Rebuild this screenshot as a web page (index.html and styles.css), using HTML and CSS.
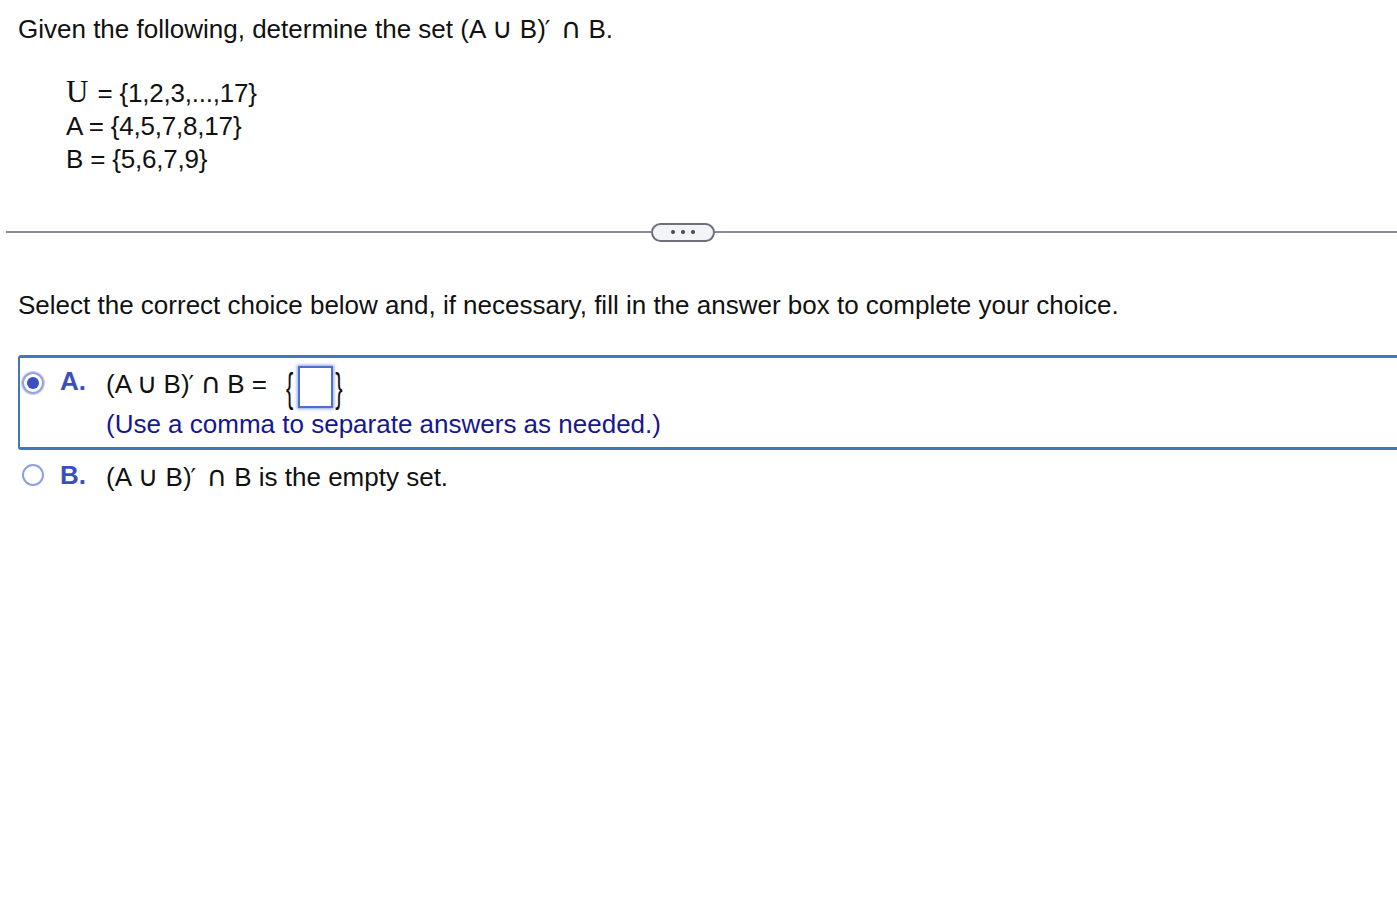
FILE: index.html
```html
<!DOCTYPE html>
<html lang="en">
<head>
<meta charset="utf-8">
<title>Set question</title>
<link rel="stylesheet" href="styles.css">
</head>
<body>
<div class="page">
  <p class="question">Given the following, determine the set (A <span class="op">∪</span> B)<span class="prime">′</span> <span class="op cap">∩</span> B.</p>
  <div class="sets">
    <div class="set-line"><span class="serif-u">U</span> = {1,2,3,...,17}</div>
    <div class="set-line">A = {4,5,7,8,17}</div>
    <div class="set-line">B = {5,6,7,9}</div>
  </div>
  <div class="divider">
    <div class="rule rule-left"></div>
    <button class="more" type="button"><span class="dot"></span><span class="dot"></span><span class="dot"></span></button>
    <div class="rule"></div>
  </div>
  <p class="instruction">Select the correct choice below and, if necessary, fill in the answer box to complete your choice.</p>
  <div class="choices">
    <div class="choice selected">
      <span class="radio checked"><span class="radio-dot"></span></span>
      <span class="letter">A.</span>
      <div class="choice-body">
        <div class="choice-line answer-line"><span class="expr">(A <span class="op">∪</span> B)<span class="prime">′</span> <span class="op cap">∩</span> B =</span><span class="brace brace-open">{</span><span class="answer-box"></span><span class="brace brace-close">}</span></div>
        <div class="hint">(Use a comma to separate answers as needed.)</div>
      </div>
    </div>
    <div class="choice plain">
      <span class="radio"></span>
      <span class="letter">B.</span>
      <div class="choice-body">
        <div class="choice-line">(A <span class="op">∪</span> B)<span class="prime">′</span> <span class="op cap">∩</span> B is the empty set.</div>
      </div>
    </div>
  </div>
</div>
</body>
</html>
```

FILE: styles.css
```css
html, body {
  margin: 0;
  padding: 0;
  background: #ffffff;
}
body {
  font-family: "Liberation Sans", Arial, sans-serif;
  color: #111111;
  font-size: 26px;
}
.page {
  padding: 14px 0 0 0;
}
.op {
  font-family: "DejaVu Sans", sans-serif;
  font-size: 1.08em;
  line-height: 0;
}
.op.cap {
  font-size: 1.08em;
  margin-left: 3px;
}
.prime {
  font-family: "DejaVu Sans", sans-serif;
  font-size: 0.95em;
  line-height: 0;
  margin-left: -1px;
}
.question {
  margin: 0 0 0 18px;
  line-height: 30px;
}
.sets {
  margin: 31px 0 0 66px;
  letter-spacing: -0.2px;
}
.set-line {
  line-height: 33px;
}
.serif-u {
  font-family: "Liberation Serif", "Times New Roman", serif;
  font-size: 31px;
  letter-spacing: 0;
  margin-right: 2px;
}
.divider {
  display: flex;
  align-items: center;
  margin: 46px 0 0 6px;
  height: 20px;
}
.rule {
  flex: 1;
  height: 2px;
  background: #8a8a97;
}
.rule-left {
  flex: none;
  width: 645px;
}
.more {
  width: 64px;
  height: 19px;
  border: 2px solid #6e6f7a;
  border-radius: 10px;
  background: #f3f4f7;
  padding: 0;
  display: flex;
  align-items: center;
  justify-content: center;
  gap: 6px;
  flex: none;
}
.dot {
  width: 4px;
  height: 4px;
  border-radius: 50%;
  background: #444650;
}
.instruction {
  margin: 48px 0 0 18px;
  line-height: 30px;
}
.choices {
  margin-top: 35px;
}
.choice {
  display: flex;
  align-items: flex-start;
  padding: 0 0 0 4px;
  margin-left: 18px;
}
.choice.selected {
  border: 3px solid #4078b9;
  border-left-width: 2px;
  border-right: none;
  border-radius: 3px 0 0 3px;
  padding: 8px 0 7px 2px;
  margin-bottom: 10px;
}
.radio {
  width: 22px;
  height: 22px;
  border: 2px solid #8fa0df;
  border-radius: 50%;
  box-sizing: border-box;
  margin-top: 6px;
  display: flex;
  align-items: center;
  justify-content: center;
  flex: none;
}
.choice.plain .radio {
  margin-top: 4px;
}
.radio.checked {
  border-color: #93a2e0;
  box-shadow: 0 0 0 1px #c8d0f0;
}
.radio-dot {
  width: 12px;
  height: 12px;
  border-radius: 50%;
  background: #3a4fc4;
}
.letter {
  color: #3b4fbc;
  font-weight: bold;
  width: 62px;
  padding-left: 16px;
  box-sizing: border-box;
  flex: none;
  line-height: 30px;
}
.choice-line {
  line-height: 34px;
  white-space: pre;
}
.answer-line {
  display: flex;
  align-items: flex-start;
}
.expr {
  line-height: 36px;
}
.expr .op {
  margin: 0 -1px;
}
.expr .op.cap {
  margin: 0 -1px 0 0;
}
.expr .prime {
  margin-right: -1px;
}
.brace {
  font-size: 22px;
  transform: scaleY(1.85);
  display: inline-block;
  line-height: 20px;
  align-self: center;
  margin: 3px 1px 0 1px;
}
.brace-open {
  margin-left: 19px;
  margin-right: 5px;
}
.brace-close {
  margin-left: 2px;
}
.answer-box {
  display: inline-block;
  width: 35px;
  height: 42px;
  border: 2px solid #4a6fd0;
  box-shadow: 0 0 3px 1px #8aa4e6;
  background: #ffffff;
  box-sizing: border-box;
}
.hint {
  color: #161690;
  line-height: 32px;
}
```
